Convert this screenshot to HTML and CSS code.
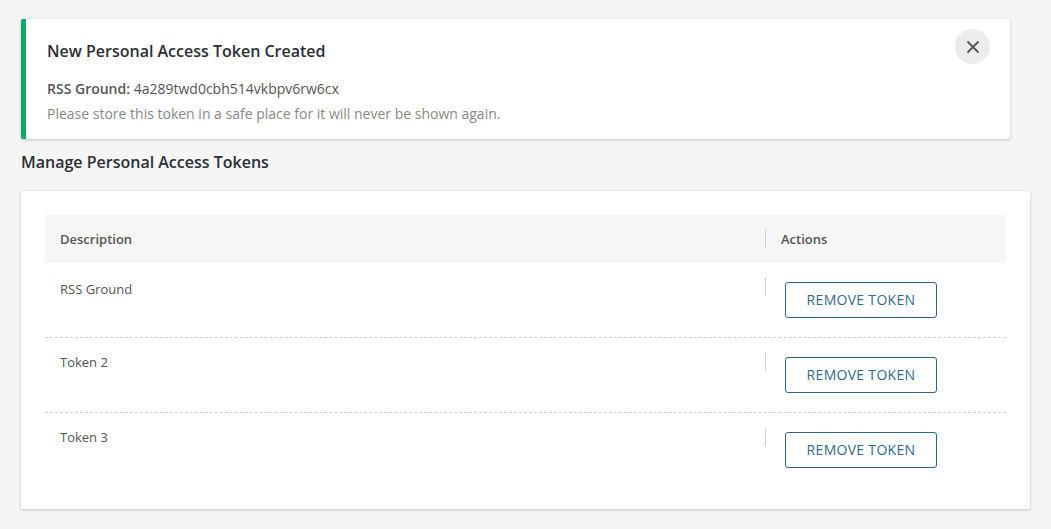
FILE: index.html
```html
<!DOCTYPE html>
<html lang="en">
<head>
<meta charset="utf-8">
<title>Personal Access Tokens</title>
<link rel="stylesheet" href="styles.css">
</head>
<body>
<main class="page">
  <section class="notice">
    <h2 class="notice-title">New Personal Access Token Created</h2>
    <p class="notice-line"><strong>RSS Ground:</strong> 4a289twd0cbh514vkbpv6rw6cx</p>
    <p class="notice-hint">Please store this token in a safe place for it will never be shown again.</p>
    <button class="close" type="button" aria-label="Close">
      <svg width="14" height="14" viewBox="0 0 14 14"><path d="M1.5 1.5 L12.5 12.5 M12.5 1.5 L1.5 12.5" stroke="#555" stroke-width="1.8" fill="none"/></svg>
    </button>
  </section>

  <h1 class="heading">Manage Personal Access Tokens</h1>

  <section class="panel">
    <div class="table">
      <div class="row head">
        <div class="cell desc">Description</div>
        <div class="cell act"><span class="sep"></span><span class="act-label">Actions</span></div>
      </div>
      <div class="row body first">
        <div class="cell desc">RSS Ground</div>
        <div class="cell act"><span class="sep"></span><button class="btn" type="button">Remove Token</button></div>
      </div>
      <div class="row body">
        <div class="cell desc">Token 2</div>
        <div class="cell act"><span class="sep"></span><button class="btn" type="button">Remove Token</button></div>
      </div>
      <div class="row body last">
        <div class="cell desc">Token 3</div>
        <div class="cell act"><span class="sep"></span><button class="btn" type="button">Remove Token</button></div>
      </div>
    </div>
  </section>
</main>
</body>
</html>
```

FILE: styles.css
```css
* { box-sizing: border-box; }

html, body {
  margin: 0;
  padding: 0;
  background: #f5f5f5;
  font-family: "Open Sans", "Noto Sans", sans-serif;
  color: #555;
}

.page {
  padding: 19px 21px 20px 21px;
}

.notice {
  position: relative;
  margin-right: 20px;
  background: #fff;
  border-left: 5px solid #0fa968;
  border-radius: 2px 3px 3px 2px;
  box-shadow: 0 1px 3px rgba(0, 0, 0, 0.22);
  padding: 20px 21px 13px 21px;
}

.notice-title {
  margin: 0 0 14px 0;
  font-size: 16px;
  font-weight: 600;
  line-height: 24px;
  color: #2b2f36;
}

.notice-line,
.notice-hint {
  margin: 0;
  font-size: 14px;
  line-height: 24px;
}

.notice-line {
  color: #555;
}

.notice-line strong {
  font-weight: 600;
}

.notice-hint {
  margin-top: 1px;
  color: #888;
}

.close {
  position: absolute;
  top: 10px;
  right: 20px;
  width: 35px;
  height: 35px;
  border: 0;
  border-radius: 50%;
  background: #ececec;
  padding: 0;
  display: flex;
  align-items: center;
  justify-content: center;
  cursor: pointer;
}

.heading {
  margin: 12px 0 18px 0;
  font-size: 16px;
  font-weight: 600;
  line-height: 22px;
  color: #2b2f36;
}

.panel {
  background: #fff;
  border-radius: 2px;
  box-shadow: 0 1px 3px rgba(0, 0, 0, 0.22);
  padding: 24px 24px 22px 24px;
}

.row {
  display: grid;
  grid-template-columns: 1fr 241px;
}

.row.head {
  background: #f6f6f6;
  height: 48px;
  align-items: center;
  font-size: 13px;
  font-weight: 600;
  color: #555;
}

.row.body {
  border-bottom: 1px dashed #cfcfcf;
  font-size: 13px;
  color: #555;
}

.row.body.last {
  border-bottom: 0;
}

.cell.desc {
  padding-left: 15px;
}

.row.body .cell.desc {
  padding-top: 15px;
  line-height: 18px;
}

.row.body.first .cell.desc {
  padding-top: 17px;
}

.cell.act {
  display: flex;
  align-items: flex-start;
}

.row.head .cell.act {
  align-items: center;
}

.sep {
  width: 1px;
  height: 18px;
  background: #d0d0d0;
  flex: none;
}

.row.body .sep {
  margin-top: 15px;
}

.act-label {
  padding-left: 15px;
  line-height: 18px;
}

.btn {
  margin: 19px 0 19px 19px;
  width: 152px;
  height: 36px;
  border: 1px solid #2f6582;
  border-radius: 3px;
  background: #fff;
  color: #33688a;
  font-family: "Open Sans", "Noto Sans", sans-serif;
  font-size: 14px;
  text-transform: uppercase;
  letter-spacing: 0.3px;
  padding: 0 0 2px 0;
  cursor: pointer;
}
```
